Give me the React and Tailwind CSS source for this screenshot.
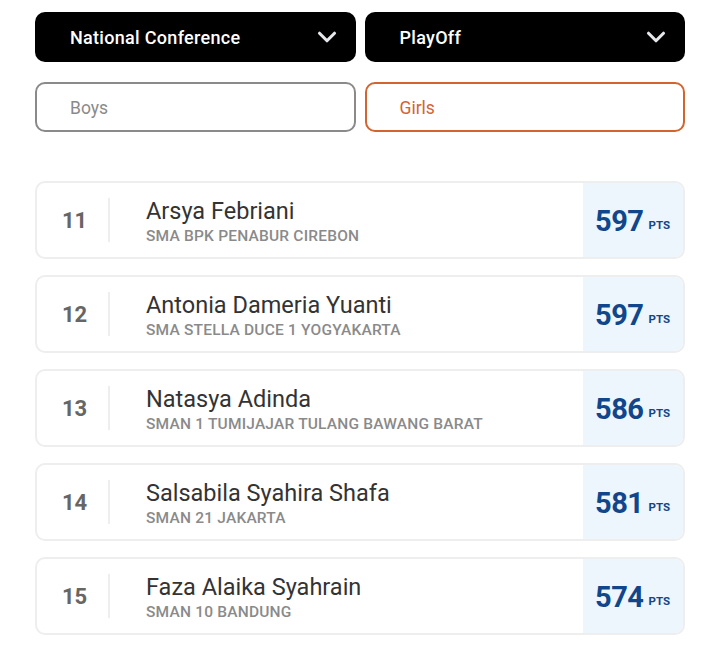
import { ChevronDown } from 'lucide-react'

const rows = [
  { rank: 11, name: 'Arsya Febriani', school: 'SMA BPK PENABUR CIREBON', pts: 597 },
  { rank: 12, name: 'Antonia Dameria Yuanti', school: 'SMA STELLA DUCE 1 YOGYAKARTA', pts: 597 },
  { rank: 13, name: 'Natasya Adinda', school: 'SMAN 1 TUMIJAJAR TULANG BAWANG BARAT', pts: 586 },
  { rank: 14, name: 'Salsabila Syahira Shafa', school: 'SMAN 21 JAKARTA', pts: 581 },
  { rank: 15, name: 'Faza Alaika Syahrain', school: 'SMAN 10 BANDUNG', pts: 574 },
]

const Select = ({ label }) => (
  <button className="flex h-[50px] flex-1 items-center justify-between rounded-[10px] bg-black pl-[35px] pr-[14px] text-[18px] font-medium tracking-[0.3px] text-white">
    <span>{label}</span>
    <ChevronDown className="h-[30px] w-[30px] text-gray-200" strokeWidth={2.5} />
  </button>
)

const Row = ({ rank, name, school, pts }) => (
  <div className="flex h-[78px] items-stretch overflow-hidden rounded-[10px] border-2 border-[#eeeeee] bg-white">
    <div className="flex items-center pl-[25px]">
      <span className="w-[22px] text-[22px] font-bold text-[#666666]">{rank}</span>
      <div className="ml-[24px] h-[44px] border-l-2 border-[#eeeeee]" />
    </div>
    <div className="flex flex-1 flex-col justify-center pl-[36px] pt-[3px]">
      <div className="text-[23.5px] leading-[28px] text-[#333333]">{name}</div>
      <div className="text-[15.5px] font-medium leading-[22px] tracking-[0.2px] text-[#8a8a8a]">{school}</div>
    </div>
    <div className="flex items-center bg-[#eef6fd] pl-[12px] pr-[13px] pt-[3px]">
      <span className="text-[29px] font-bold tracking-[-0.5px] text-[#11478a]">{pts}</span>
      <span className="ml-[5px] mt-[8px] text-[11.5px] font-bold text-[#11478a]">PTS</span>
    </div>
  </div>
)

export default function App() {
  return (
    <div className="min-h-[648px] bg-white px-[35px] pt-[12px]" style={{ fontFamily: 'Roboto, "Noto Sans", sans-serif' }}>
      <div className="flex gap-[9px]">
        <Select label="National Conference" />
        <Select label="PlayOff" />
      </div>
      <div className="mt-[20px] flex gap-[9px]">
        <button className="flex h-[50px] flex-1 items-center rounded-[10px] border-2 border-[#8a8a8a] pl-[33px] pt-[2px] text-[17.5px] text-[#8a8a8a]">Boys</button>
        <button className="flex h-[50px] flex-1 items-center rounded-[10px] border-2 border-[#d2642f] pl-[33px] pt-[2px] text-[17.5px] text-[#d2642f]">Girls</button>
      </div>
      <div className="mt-[49px] flex flex-col gap-[16px]">
        {rows.map((r) => (
          <Row key={r.rank} {...r} />
        ))}
      </div>
    </div>
  )
}
